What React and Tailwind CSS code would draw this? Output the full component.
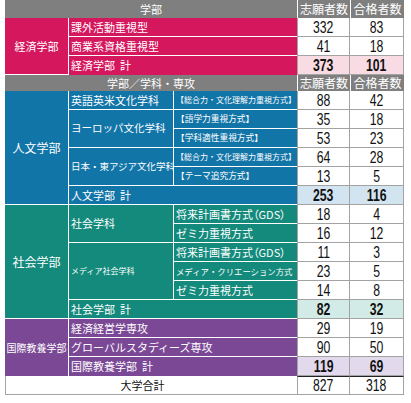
import React from 'react';

const jp = "font-['Noto_Sans_CJK_JP',sans-serif]";
const num = "font-['Liberation_Sans',sans-serif]";

// section colours
const ECO = { bg: 'bg-[#d5175e]', total: 'bg-[#f9dbe3]' };
const HUM = { bg: 'bg-[#1275a8]', total: 'bg-[#d3e4f1]' };
const SOC = { bg: 'bg-[#138a7c]', total: 'bg-[#d3ebe6]' };
const INT = { bg: 'bg-[#7a4895]', total: 'bg-[#e3d9ec]' };

function Label({ className = '', children }) {
  return (
    <div className={`flex items-center whitespace-nowrap overflow-hidden text-white leading-none ${jp} ${className}`}>
      {children}
    </div>
  );
}

function Nums({ a, b, bold, bg = 'bg-white', topLine }) {
  const base = `flex items-center justify-center border-b border-r border-[#a3a3a3] text-[17px] leading-none text-[#111] ${num} ${bg} ${bold ? 'font-bold' : ''} ${topLine ? 'border-t border-t-[#222]' : ''}`;
  return (
    <>
      <div className={`${base} border-l`}>
        <span className="inline-block scale-x-[0.72]">{a}</span>
      </div>
      <div className={base}>
        <span className="inline-block scale-x-[0.72]">{b}</span>
      </div>
    </>
  );
}

function Head({ title }) {
  return (
    <>
      <Label className="col-span-3 justify-center bg-[#7f7f7f] text-[11px]">{title}</Label>
      <Label className="justify-center bg-[#7f7f7f] border-l border-white text-[12px]">志願者数</Label>
      <Label className="justify-center bg-[#7f7f7f] border-l border-white text-[12px]">合格者数</Label>
    </>
  );
}

export default function App() {
  return (
    <div className="bg-white w-[411px] h-[403px]">
      <div className="ml-[5px] w-[399px] grid grid-cols-[64px_105px_123px_53px_54px] grid-rows-[18px_19px_19px_19px_16px_repeat(16,19px)]">
        <Head title="学部" />

        {/* 経済学部 */}
        <Label className={`row-span-3 justify-center ${ECO.bg} border-r border-b border-white text-[11px]`}>経済学部</Label>
        <Label className={`col-span-2 pl-[2px] ${ECO.bg} border-b border-white text-[11px]`}>課外活動重視型</Label>
        <Nums a="332" b="83" />
        <Label className={`col-span-2 pl-[2px] ${ECO.bg} border-b border-white text-[11px]`}>商業系資格重視型</Label>
        <Nums a="41" b="18" />
        <Label className={`col-span-2 pl-[2px] ${ECO.bg} text-[11px]`}>経済学部&nbsp;&nbsp;計</Label>
        <Nums a="373" b="101" bold bg={ECO.total} />

        <Head title="学部／学科・専攻" />

        {/* 人文学部 */}
        <Label className={`row-span-6 justify-center ${HUM.bg} border-r border-b border-white text-[12px]`}>人文学部</Label>
        <Label className={`pl-[2px] ${HUM.bg} border-r border-b border-white text-[11px]`}>英語英米文化学科</Label>
        <Label className={`pl-[2px] ${HUM.bg} border-b border-white text-[8px]`}>【総合力・文化理解力重視方式】</Label>
        <Nums a="88" b="42" />
        <Label className={`row-span-2 pl-[2px] ${HUM.bg} border-r border-b border-white text-[10.5px]`}>ヨーロッパ文化学科</Label>
        <Label className={`pl-[2px] ${HUM.bg} border-b border-white text-[8.7px]`}>【語学力重視方式】</Label>
        <Nums a="35" b="18" />
        <Label className={`pl-[2px] ${HUM.bg} border-b border-white text-[8.7px]`}>【学科適性重視方式】</Label>
        <Nums a="53" b="23" />
        <Label className={`row-span-2 pl-[2px] ${HUM.bg} border-r border-b border-white text-[9.5px]`}>日本・東アジア文化学科</Label>
        <Label className={`pl-[2px] ${HUM.bg} border-b border-white text-[8px]`}>【総合力・文化理解力重視方式】</Label>
        <Nums a="64" b="28" />
        <Label className={`pl-[2px] ${HUM.bg} border-b border-white text-[8.7px]`}>【テーマ追究方式】</Label>
        <Nums a="13" b="5" />
        <Label className={`col-span-2 pl-[2px] ${HUM.bg} border-b border-white text-[11px]`}>人文学部&nbsp;&nbsp;計</Label>
        <Nums a="253" b="116" bold bg={HUM.total} />

        {/* 社会学部 */}
        <Label className={`row-span-6 justify-center ${SOC.bg} border-r border-b border-white text-[12px]`}>社会学部</Label>
        <Label className={`row-span-2 pl-[2px] ${SOC.bg} border-r border-b border-white text-[11px]`}>社会学科</Label>
        <Label className={`pl-[2px] ${SOC.bg} border-b border-white text-[11px] [font-feature-settings:'palt']`}>将来計画書方式（GDS）</Label>
        <Nums a="18" b="4" />
        <Label className={`pl-[2px] ${SOC.bg} border-b border-white text-[11px]`}>ゼミ力重視方式</Label>
        <Nums a="16" b="12" />
        <Label className={`row-span-3 pl-[2px] ${SOC.bg} border-r border-b border-white text-[8px]`}>メディア社会学科</Label>
        <Label className={`pl-[2px] ${SOC.bg} border-b border-white text-[11px] [font-feature-settings:'palt']`}>将来計画書方式（GDS）</Label>
        <Nums a="11" b="3" />
        <Label className={`pl-[2px] ${SOC.bg} border-b border-white text-[8.4px]`}>メディア・クリエーション方式</Label>
        <Nums a="23" b="5" />
        <Label className={`pl-[2px] ${SOC.bg} border-b border-white text-[11px]`}>ゼミ力重視方式</Label>
        <Nums a="14" b="8" />
        <Label className={`col-span-2 pl-[2px] ${SOC.bg} border-b border-white text-[11px]`}>社会学部&nbsp;&nbsp;計</Label>
        <Nums a="82" b="32" bold bg={SOC.total} />

        {/* 国際教養学部 */}
        <Label className={`row-span-3 justify-center ${INT.bg} border-r border-white text-[10px]`}>国際教養学部</Label>
        <Label className={`col-span-2 pl-[2px] ${INT.bg} border-b border-white text-[11px]`}>経済経営学専攻</Label>
        <Nums a="29" b="19" />
        <Label className={`col-span-2 pl-[2px] ${INT.bg} border-b border-white text-[11px]`}>グローバルスタディーズ専攻</Label>
        <Nums a="90" b="50" />
        <Label className={`col-span-2 pl-[2px] ${INT.bg} text-[11px]`}>国際教養学部&nbsp;&nbsp;計</Label>
        <Nums a="119" b="69" bold bg={INT.total} />

        {/* 大学合計 */}
        <div className={`col-span-3 flex items-center justify-center pr-[18px] bg-white border-l border-b border-[#a3a3a3] text-[11px] text-[#111] leading-none ${jp}`}>
          大学合計
        </div>
        <Nums a="827" b="318" topLine />
      </div>
    </div>
  );
}
